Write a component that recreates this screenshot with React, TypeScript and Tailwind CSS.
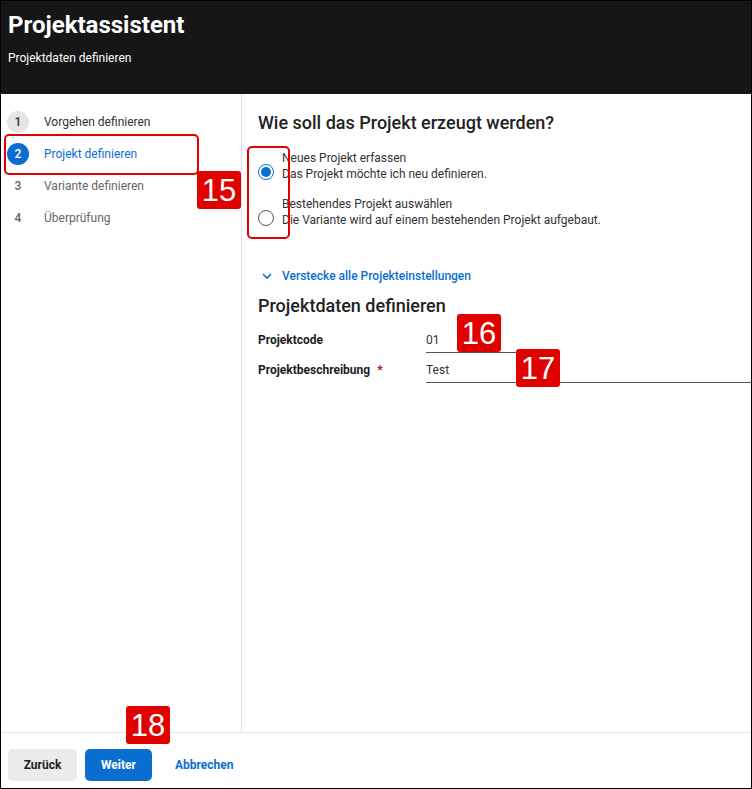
import React from "react";

const font = { fontFamily: "Roboto, 'Noto Sans', sans-serif" };

function Badge({ n }: { n: string }) {
  return (
    <div className="flex h-[38px] w-[44px] items-center justify-center rounded-[3px] bg-[#e00000] text-[31px] leading-none text-white" style={{ fontFamily: "'Liberation Sans', Arial, sans-serif" }}>
      {n}
    </div>
  );
}

function Step({ n, label, state }: { n: string; label: string; state: "done" | "active" | "todo" }) {
  const circle =
    state === "active"
      ? "bg-[#0a6ed1] text-white"
      : state === "done"
      ? "bg-[#e5e5e5] text-[#333]"
      : "text-[#666]";
  const text = state === "active" ? "text-[#0a6ed1]" : state === "done" ? "text-[#333]" : "text-[#666]";
  return (
    <div className="flex h-[32px] items-center">
      <div className={`flex h-[22px] w-[22px] items-center justify-center rounded-full text-[12px] font-medium ${circle}`}>{n}</div>
      <div className={`ml-[15px] text-[12px] ${text}`}>{label}</div>
    </div>
  );
}

function Radio({ checked }: { checked?: boolean }) {
  return (
    <div className={`mt-[14px] flex h-[16px] w-[16px] shrink-0 items-center justify-center rounded-full border ${checked ? "border-[#0a6ed1]" : "border-[#555]"}`}>
      {checked && <div className="h-[10px] w-[10px] rounded-full bg-[#0a6ed1]" />}
    </div>
  );
}

export default function App() {
  return (
    <div className="flex h-[789px] w-[752px] flex-col overflow-hidden border border-black bg-white text-[#1d1d1d]" style={font}>
      <header className="h-[93px] shrink-0 bg-[#161616] px-[7px] pt-[9px] text-white">
        <h1 className="text-[24px] font-bold leading-[30px]">Projektassistent</h1>
        <p className="mt-[10px] text-[12px] leading-[16px]">Projektdaten definieren</p>
      </header>

      <div className="flex min-h-0 flex-1">
        <aside className="relative w-[241px] shrink-0 border-r border-[#e3e3e3] px-[6px] pt-[12px]">
          <Step n="1" label="Vorgehen definieren" state="done" />
          <Step n="2" label="Projekt definieren" state="active" />
          <Step n="3" label="Variante definieren" state="todo" />
          <Step n="4" label="Überprüfung" state="todo" />
          <div className="absolute left-[3px] top-[40px] h-[41px] w-[195px] rounded-[5px] border-2 border-[#e00000]" />
          <div className="absolute left-[196px] top-[77px]">
            <Badge n="15" />
          </div>
        </aside>

        <main className="relative min-w-0 flex-1 pl-[16px] pt-[17px]">
          <h2 className="text-[18px] font-medium leading-[24px] text-[#222]">Wie soll das Projekt erzeugt werden?</h2>

          <div className="mt-[15px] flex flex-col gap-[14px]">
            <div className="flex items-start">
              <Radio checked />
              <div className="ml-[8px] text-[12px] leading-[16px] text-[#333]">
                <div>Neues Projekt erfassen</div>
                <div>Das Projekt möchte ich neu definieren.</div>
              </div>
            </div>
            <div className="flex items-start">
              <Radio />
              <div className="ml-[8px] text-[12px] leading-[16px] text-[#333]">
                <div>Bestehendes Projekt auswählen</div>
                <div>Die Variante wird auf einem bestehenden Projekt aufgebaut.</div>
              </div>
            </div>
          </div>
          <div className="absolute left-[5px] top-[52px] h-[93px] w-[43px] rounded-[5px] border-2 border-[#e00000]" />

          <div className="mt-[40px] flex items-center pl-[3px] text-[12px] font-medium leading-[16px] text-[#0a6ed1]">
            <svg width="12" height="12" viewBox="0 0 12 12" className="mr-[9px]">
              <path d="M2 4 L6 8 L10 4" fill="none" stroke="#0a6ed1" strokeWidth="1.6" />
            </svg>
            Verstecke alle Projekteinstellungen
          </div>

          <h2 className="mt-[10px] text-[18px] font-medium leading-[24px] text-[#222]">Projektdaten definieren</h2>

          <div className="mt-[8px] flex h-[28px] items-center">
            <div className="w-[168px] text-[12px] font-bold text-[#1d1d1d]">Projektcode</div>
            <div className="flex h-[26px] w-[122px] items-center border-b border-[#555] text-[12px] text-[#333]">01</div>
          </div>
          <div className="mt-[2px] flex h-[28px] items-center">
            <div className="w-[168px] text-[12px] font-bold text-[#1d1d1d]">
              Projektbeschreibung <span className="ml-[4px] text-[#c00]">*</span>
            </div>
            <div className="flex h-[26px] flex-1 items-center border-b border-[#555] text-[12px] text-[#333]">Test</div>
          </div>

          <div className="absolute left-[215px] top-[220px]">
            <Badge n="16" />
          </div>
          <div className="absolute left-[274px] top-[255px]">
            <Badge n="17" />
          </div>
        </main>
      </div>

      <footer className="relative flex h-[56px] shrink-0 items-start gap-[8px] border-t border-[#e3e3e3] px-[7px] pt-[16px]">
        <button className="h-[32px] w-[69px] rounded-[5px] bg-[#ebebeb] text-[12px] font-bold text-[#222]">Zurück</button>
        <button className="h-[32px] w-[67px] rounded-[5px] bg-[#0a6ed1] text-[12px] font-bold text-white">Weiter</button>
        <button className="ml-[15px] h-[32px] text-[12px] font-bold text-[#0a6ed1]">Abbrechen</button>
        <div className="absolute left-[125px] top-[-27px]">
          <Badge n="18" />
        </div>
      </footer>
    </div>
  );
}
